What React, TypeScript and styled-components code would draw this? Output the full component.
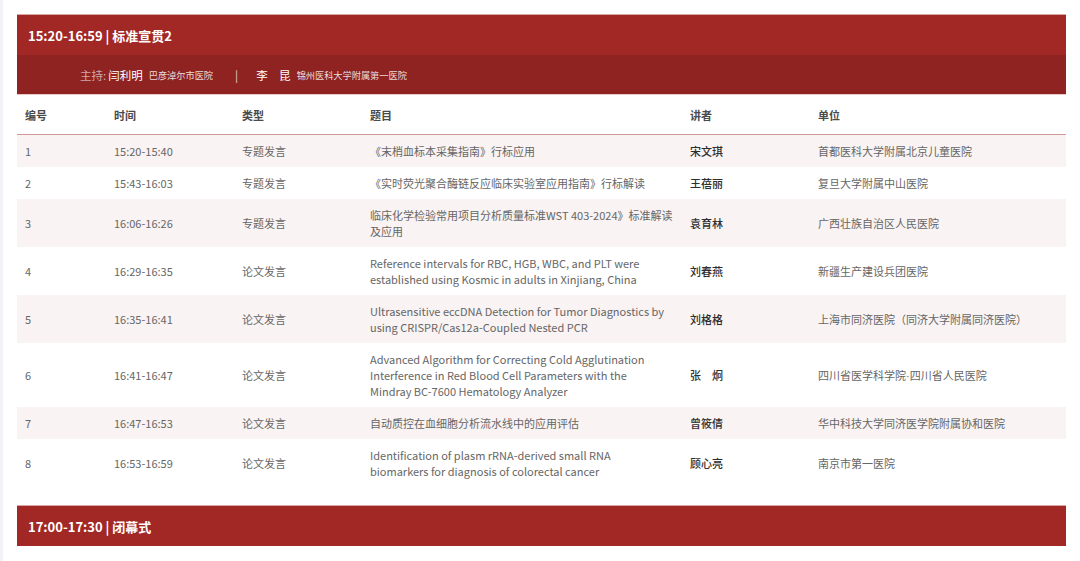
import React from "react";
import styled, { createGlobalStyle } from "styled-components";

const GlobalStyle = createGlobalStyle`
  html, body { margin: 0; padding: 0; background: #ffffff; }
  body {
    font-family: "Noto Sans CJK SC", "Noto Sans", sans-serif;
    -webkit-font-smoothing: antialiased;
  }
`;

const Page = styled.div`
  min-height: 561px;
  box-sizing: border-box;
  border-left: 3px solid #f3f3f7;
  padding: 14px 14px 0 14px;
  display: flex;
  flex-direction: column;
`;

const Session = styled.section`
  display: flex;
  flex-direction: column;
`;

const TitleBand = styled.div`
  height: 41px;
  background: #a22826;
  border-top: 1px solid #d7a6a5;
  box-sizing: border-box;
  display: flex;
  align-items: center;
  padding: 0 11px;
  color: #ffffff;
  font-size: 13px;
  font-weight: 700;
`;

const HostBand = styled.div`
  height: 40px;
  background: #8e2321;
  border-bottom: 1px solid #e9c9c8;
  box-sizing: border-box;
  display: flex;
  align-items: center;
  padding: 0 0 0 63px;
  color: #ffffff;
  font-size: 11.5px;
`;

const HostLabel = styled.span`
  color: rgba(255, 255, 255, 0.62);
  margin-right: 2px;
`;

const HostName = styled.span`
  color: #ffffff;
  margin-right: 6px;
`;

const HostOrg = styled.span`
  color: rgba(255, 255, 255, 0.85);
  font-size: 9.2px;
`;

const Divider = styled.span`
  color: rgba(255, 255, 255, 0.8);
  margin: 0 18px 0 22px;
`;

const Table = styled.div`
  display: flex;
  flex-direction: column;
`;

const Row = styled.div<{ $head?: boolean; $striped?: boolean }>`
  display: grid;
  grid-template-columns: 89px 128px 128px 320px 128px 1fr;
  align-items: center;
  background: ${(p) => (p.$striped ? "#f9f3f3" : "#ffffff")};
  min-height: ${(p) => (p.$head ? "39px" : "32px")};
  border-bottom: ${(p) => (p.$head ? "1px solid #d09898" : "none")};
  font-size: 11px;
  line-height: 16px;
  color: #666666;
`;

const HeadCell = styled.div`
  padding: 0 8px;
  font-weight: 700;
  color: #4a4a4a;
`;

const Cell = styled.div<{ $strong?: boolean }>`
  padding: 8px 8px;
  color: ${(p) => (p.$strong ? "#2e2e2e" : "#666666")};
  font-weight: ${(p) => (p.$strong ? 500 : 400)};
`;

const Line = styled.span`
  display: block;
  white-space: nowrap;
`;

const Dot = styled.span`
  font-family: "Liberation Sans", sans-serif;
`;

const Spacer = styled.div`
  height: 18px;
`;

type Item = {
  no: string;
  time: string;
  type: string;
  topic: string[];
  speaker: string;
  org: React.ReactNode;
};

const items: Item[] = [
  { no: "1", time: "15:20-15:40", type: "专题发言", topic: ["《末梢血标本采集指南》行标应用"], speaker: "宋文琪", org: "首都医科大学附属北京儿童医院" },
  { no: "2", time: "15:43-16:03", type: "专题发言", topic: ["《实时荧光聚合酶链反应临床实验室应用指南》行标解读"], speaker: "王蓓丽", org: "复旦大学附属中山医院" },
  { no: "3", time: "16:06-16:26", type: "专题发言", topic: ["临床化学检验常用项目分析质量标准WST 403-2024》标准解读", "及应用"], speaker: "袁育林", org: "广西壮族自治区人民医院" },
  { no: "4", time: "16:29-16:35", type: "论文发言", topic: ["Reference intervals for RBC, HGB, WBC, and PLT were", "established using Kosmic in adults in Xinjiang, China"], speaker: "刘春燕", org: "新疆生产建设兵团医院" },
  { no: "5", time: "16:35-16:41", type: "论文发言", topic: ["Ultrasensitive eccDNA Detection for Tumor Diagnostics by", "using CRISPR/Cas12a-Coupled Nested PCR"], speaker: "刘格格", org: "上海市同济医院（同济大学附属同济医院）" },
  { no: "6", time: "16:41-16:47", type: "论文发言", topic: ["Advanced Algorithm for Correcting Cold Agglutination", "Interference in Red Blood Cell Parameters with the", "Mindray BC-7600 Hematology Analyzer"], speaker: "张　炯", org: (<>四川省医学科学院<Dot>·</Dot>四川省人民医院</>) },
  { no: "7", time: "16:47-16:53", type: "论文发言", topic: ["自动质控在血细胞分析流水线中的应用评估"], speaker: "曾筱倩", org: "华中科技大学同济医学院附属协和医院" },
  { no: "8", time: "16:53-16:59", type: "论文发言", topic: ["Identification of plasm rRNA-derived small RNA", "biomarkers for diagnosis of colorectal cancer"], speaker: "顾心亮", org: "南京市第一医院" },
];

const headers = ["编号", "时间", "类型", "题目", "讲者", "单位"];

export default function App() {
  return (
    <>
      <GlobalStyle />
      <Page>
        <Session>
          <TitleBand>15:20-16:59 | 标准宣贯2</TitleBand>
          <HostBand>
            <HostLabel>主持:</HostLabel>
            <HostName>闫利明</HostName>
            <HostOrg>巴彦淖尔市医院</HostOrg>
            <Divider>|</Divider>
            <HostName>李　昆</HostName>
            <HostOrg>锦州医科大学附属第一医院</HostOrg>
          </HostBand>
          <Table>
            <Row $head>
              {headers.map((h) => (
                <HeadCell key={h}>{h}</HeadCell>
              ))}
            </Row>
            {items.map((it, i) => (
              <Row key={it.no} $striped={i % 2 === 0}>
                <Cell>{it.no}</Cell>
                <Cell>{it.time}</Cell>
                <Cell>{it.type}</Cell>
                <Cell>
                  {it.topic.map((l) => (
                    <Line key={l}>{l}</Line>
                  ))}
                </Cell>
                <Cell $strong>{it.speaker}</Cell>
                <Cell>{it.org}</Cell>
              </Row>
            ))}
          </Table>
        </Session>
        <Spacer />
        <Session>
          <TitleBand>17:00-17:30 | 闭幕式</TitleBand>
        </Session>
      </Page>
    </>
  );
}
